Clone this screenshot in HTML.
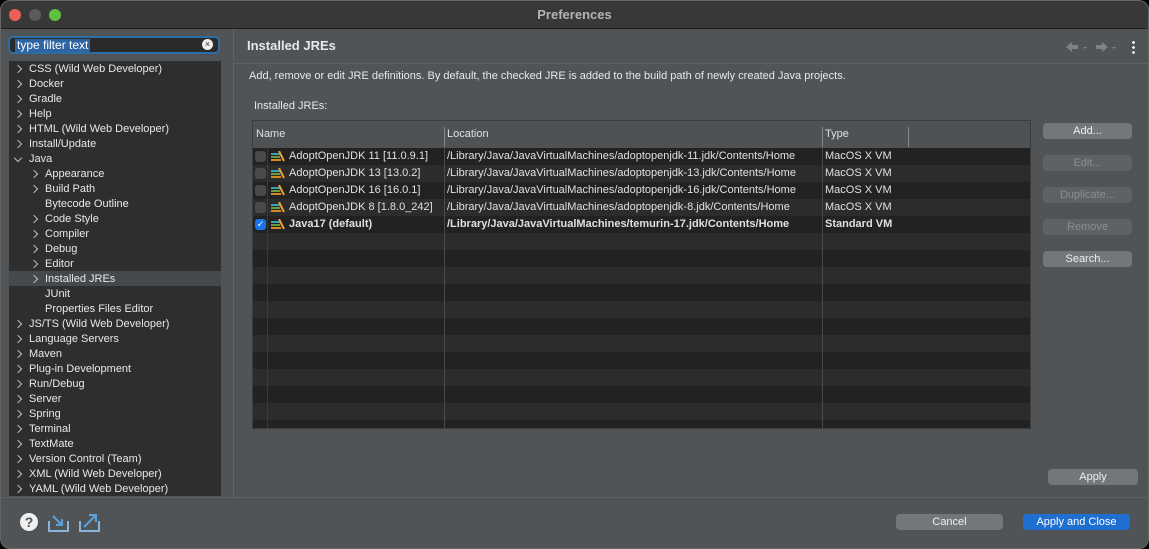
<!DOCTYPE html>
<html><head><style>
body{margin:0;width:1149px;height:549px;background:#000;font-family:"Liberation Sans",sans-serif;font-size:11px;color:#e0e0e0;overflow:hidden;position:relative}
.win{position:absolute;left:0;top:0;width:1147px;height:547px;background:#505457;border-radius:10px;overflow:hidden;border:1px solid #666}
.title{position:absolute;left:0;top:0;width:100%;height:27px;background:#383838;border-bottom:1px solid #1e1e1e;text-align:center;line-height:27px;font-size:13px;font-weight:bold;color:#b4b4b4}
.dot{position:absolute;top:8px;width:12px;height:12px;border-radius:50%}
.a{position:absolute;white-space:nowrap}
.tree{position:absolute;left:8px;top:60px;width:212px;height:435px;background:#2e2e2e}
.ti{position:absolute;height:15px;line-height:15px;font-size:11px;color:#e8e8e8}
.chev{position:absolute;width:5px;height:5px;border-right:1.3px solid #bbb;border-top:1.3px solid #bbb;transform:rotate(45deg)}
.tbl{position:absolute;left:251px;top:119px;width:779px;height:309px;background:#252525;border:1px solid #3c3c3c;box-sizing:border-box;overflow:hidden}
.row{position:absolute;left:0;width:100%;height:17px;line-height:17px}
.btn{position:absolute;height:16px;line-height:16px;border-radius:4px;background:#74777a;text-align:center;color:#eee;font-size:11px}
.dis{background:#5f6265;color:#8c8f91}
.cb{position:absolute;left:2px;top:3px;width:11px;height:11px;border-radius:3px;background:#4a4a4a}
.ic{position:absolute;left:18px;top:3px}
</style></head><body><div class="win">
<div class="title">Preferences</div>
<div class="dot" style="left:8px;background:#ec5f57"></div>
<div class="dot" style="left:28px;background:#5a5a5a"></div>
<div class="dot" style="left:48px;background:#5fc03f"></div>

<div class="a" style="left:7px;top:35px;width:212px;height:18px;border:2px solid #2c6ea3;border-radius:5px;background:#2a2a2a;box-sizing:border-box"></div>
<div class="a" style="left:14px;top:38px;height:13px;line-height:13px;background:#2f64a4;color:#fff;font-size:12px;padding:0 2px">type filter text</div>
<div class="a" style="left:201px;top:38px;width:11px;height:11px;border-radius:50%;background:#eee;color:#333;font-size:9px;line-height:11px;text-align:center">×</div>

<div class="tree">
<div class="a" style="left:0;top:210px;width:212px;height:15px;background:#46494c"></div>
</div>
<div id="t"></div>
<div class="a" style="left:232px;top:28px;width:1px;height:468px;background:#5e6265"></div>
<div class="a" style="left:233px;top:62px;width:914px;height:1px;background:#5e6265"></div>
<div class="a" style="left:246px;top:37px;font-size:13px;font-weight:bold;color:#e8e8e8">Installed JREs</div>
<svg class="a" style="left:1064px;top:39px" width="56" height="14"><path d="M1 7l6-5v3h6v4H7v3z" fill="#7e8285"/><path d="M18 7l2 2 2-2z" fill="#7e8285"/><path d="M43 7l-6-5v3h-6v4h6v3z" fill="#7e8285"/><path d="M47 7l2 2 2-2z" fill="#7e8285"/></svg>
<div class="a" style="left:1131px;top:39px;width:3px;height:14px;background:radial-gradient(circle,#fff 1.2px,transparent 1.5px) 0 0/3px 5px"></div>
<div class="a" style="left:248px;top:69px;color:#e8e8e8">Add, remove or edit JRE definitions. By default, the checked JRE is added to the build path of newly created Java projects.</div>
<div class="a" style="left:253px;top:99px;color:#e8e8e8">Installed JREs:</div>

<div class="tbl">
<div class="a" style="left:0;top:0;width:100%;height:27px;background:#4e5255"></div>
<div class="a" style="left:3px;top:7px">Name</div>
<div class="a" style="left:194px;top:7px">Location</div>
<div class="a" style="left:572px;top:7px">Type</div>
<div id="rows"></div>
<div class="a" style="left:14px;top:27px;width:1px;height:290px;background:#3a3a3a"></div>
<div class="a" style="left:191px;top:6px;width:1px;height:310px;background:#4a4a4a"></div>
<div class="a" style="left:569px;top:6px;width:1px;height:310px;background:#4a4a4a"></div>
<div class="a" style="left:191px;top:6px;width:1px;height:20px;background:#888"></div>
<div class="a" style="left:569px;top:6px;width:1px;height:20px;background:#888"></div>
<div class="a" style="left:655px;top:6px;width:1px;height:20px;background:#888"></div>
</div>

<div class="btn" style="left:1042px;top:122px;width:89px">Add...</div>
<div class="btn dis" style="left:1042px;top:154px;width:89px">Edit...</div>
<div class="btn dis" style="left:1042px;top:186px;width:89px">Duplicate...</div>
<div class="btn dis" style="left:1042px;top:218px;width:89px">Remove</div>
<div class="btn" style="left:1042px;top:250px;width:89px">Search...</div>
<div class="btn" style="left:1047px;top:468px;width:90px">Apply</div>
<div class="a" style="left:0;top:496px;width:1147px;height:1px;background:#5e6265"></div>
<div class="btn" style="left:895px;top:513px;width:107px">Cancel</div>
<div class="btn" style="left:1022px;top:513px;width:107px;background:#1f6fd0;color:#fff">Apply and Close</div>

<div class="a" style="left:19px;top:512px;width:18px;height:18px;border-radius:50%;background:#f0f0f0;color:#505457;font-weight:bold;font-size:14px;line-height:18px;text-align:center">?</div>
<svg class="a" style="left:46px;top:512px" width="24" height="20"><path d="M2 8v10h19V8" fill="none" stroke="#8ab4dc" stroke-width="2"/><path d="M6 3l9 9M9 12h6V6" fill="none" stroke="#5aa0dc" stroke-width="2"/></svg>
<svg class="a" style="left:77px;top:511px" width="24" height="21"><path d="M2 9v10h19V9" fill="none" stroke="#8ab4dc" stroke-width="2"/><path d="M6 15l11-11M11 3h7v7" fill="none" stroke="#5aa0dc" stroke-width="2"/></svg>
</div>
<script>
var items=[[0,1,"CSS (Wild Web Developer)"],[0,1,"Docker"],[0,1,"Gradle"],[0,1,"Help"],[0,1,"HTML (Wild Web Developer)"],[0,1,"Install/Update"],[0,2,"Java"],[1,1,"Appearance"],[1,1,"Build Path"],[1,0,"Bytecode Outline"],[1,1,"Code Style"],[1,1,"Compiler"],[1,1,"Debug"],[1,1,"Editor"],[1,1,"Installed JREs"],[1,0,"JUnit"],[1,0,"Properties Files Editor"],[0,1,"JS/TS (Wild Web Developer)"],[0,1,"Language Servers"],[0,1,"Maven"],[0,1,"Plug-in Development"],[0,1,"Run/Debug"],[0,1,"Server"],[0,1,"Spring"],[0,1,"Terminal"],[0,1,"TextMate"],[0,1,"Version Control (Team)"],[0,1,"XML (Wild Web Developer)"],[0,1,"YAML (Wild Web Developer)"]];
var h="";items.forEach(function(it,i){var y=61+i*15,x=it[0]?44:28;
if(it[1]==1)h+='<div class="chev" style="left:'+(x-14)+'px;top:'+(y+4)+'px"></div>';
if(it[1]==2)h+='<div class="chev" style="left:'+(x-14)+'px;top:'+(y+3)+'px;transform:rotate(135deg)"></div>';
h+='<div class="ti" style="left:'+x+'px;top:'+y+'px">'+it[2]+'</div>';});
document.getElementById("t").innerHTML=h;
var r=[["AdoptOpenJDK 11 [11.0.9.1]","/Library/Java/JavaVirtualMachines/adoptopenjdk-11.jdk/Contents/Home","MacOS X VM"],["AdoptOpenJDK 13 [13.0.2]","/Library/Java/JavaVirtualMachines/adoptopenjdk-13.jdk/Contents/Home","MacOS X VM"],["AdoptOpenJDK 16 [16.0.1]","/Library/Java/JavaVirtualMachines/adoptopenjdk-16.jdk/Contents/Home","MacOS X VM"],["AdoptOpenJDK 8 [1.8.0_242]","/Library/Java/JavaVirtualMachines/adoptopenjdk-8.jdk/Contents/Home","MacOS X VM"],["Java17 (default)","/Library/Java/JavaVirtualMachines/temurin-17.jdk/Contents/Home","Standard VM"]];
var s="";for(var i=0;i<17;i++){var y=27+i*17,bg=i%2?"#2c2c2c":"#222";s+='<div class="row" style="top:'+y+'px;background:'+bg+'">';
if(i<5){var b=i==4?"font-weight:bold;":"";
s+=(i==4?'<div class="cb" style="background:#1a73e8;color:#fff;font-size:9px;line-height:11px;text-align:center">✓</div>':'<div class="cb"></div>');
s+='<svg class="ic" width="14" height="11"><rect x="0" y="2" width="9" height="2" fill="#3a9fb0"/><rect x="0" y="5" width="9" height="2" fill="#6a9a3a"/><rect x="0" y="8" width="10" height="2" fill="#d08a2a"/><path d="M8 0l5 10" stroke="#e8a030" stroke-width="2"/></svg>';
s+='<div class="a" style="left:36px;'+b+'">'+r[i][0]+'</div><div class="a" style="left:194px;'+b+'">'+r[i][1]+'</div><div class="a" style="left:572px;'+b+'">'+r[i][2]+'</div>';}
s+='</div>';}
document.getElementById("rows").innerHTML=s;
</script>
</body></html>
